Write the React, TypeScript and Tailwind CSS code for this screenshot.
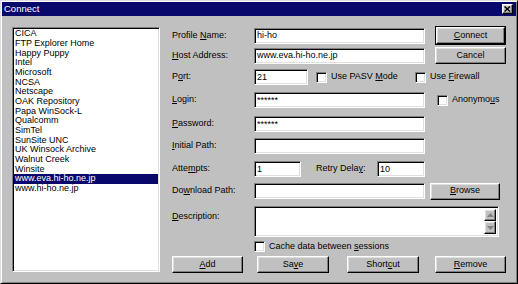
import React from "react";

const sunken =
  "border border-t-[#808080] border-l-[#808080] border-b-white border-r-white shadow-[inset_1px_1px_0_#000000,inset_-1px_-1px_0_#dfdfdf]";
const raised =
  "border border-t-white border-l-white border-b-black border-r-black shadow-[inset_-1px_-1px_0_#808080,inset_1px_1px_0_#dfdfdf]";

const items = [
  "CICA",
  "FTP Explorer Home",
  "Happy Puppy",
  "Intel",
  "Microsoft",
  "NCSA",
  "Netscape",
  "OAK Repository",
  "Papa WinSock-L",
  "Qualcomm",
  "SimTel",
  "SunSite UNC",
  "UK Winsock Archive",
  "Walnut Creek",
  "Winsite",
  "www.eva.hi-ho.ne.jp",
  "www.hi-ho.ne.jp",
];

function L({ pre, u, post }: { pre?: string; u: string; post?: string }) {
  return (
    <span className="whitespace-pre">
      {pre}
      <span className="underline underline-offset-[1px]">{u}</span>
      {post}
    </span>
  );
}

function Input({ w, value }: { w: string; value?: string }) {
  return (
    <div className={`${sunken} ${w} h-[16px] bg-white flex items-center pl-[2px] overflow-hidden`}>
      <span className="whitespace-pre leading-none">{value}</span>
    </div>
  );
}

function Check() {
  return <div className={`${sunken} w-[11px] h-[11px] bg-white shrink-0`} />;
}

function Button({ children, w, cls = "" }: { children: React.ReactNode; w: string; cls?: string }) {
  return (
    <div className={`${raised} ${w} h-[17px] flex items-center justify-center shrink-0 ${cls}`}>
      {children}
    </div>
  );
}

export default function App() {
  return (
    <div className="w-[518px] h-[284px] bg-[#c0c0c0] font-['Liberation_Sans',Arial,sans-serif] text-[9px] text-black border border-t-[#dfdfdf] border-l-[#dfdfdf] border-b-black border-r-black shadow-[inset_1px_1px_0_#ffffff,inset_-1px_-1px_0_#808080] p-[1px] overflow-hidden">
      {/* Title bar */}
      <div className="h-[14px] bg-[#08086b] flex items-center justify-between pl-[2px] pr-[3px]">
        <span className="text-white text-[9.5px] leading-none">Connect</span>
        <div className={`${raised} w-[11px] h-[10px] bg-[#c0c0c0] flex items-center justify-center`}>
          <svg width="7" height="6" viewBox="0 0 7 6">
            <path d="M0.5 0.5 L6 5.5 M6 0.5 L0.5 5.5" stroke="#000" strokeWidth="1.4" />
          </svg>
        </div>
      </div>

      {/* Body */}
      <div className="flex pl-[10px] pt-[11px]">
        {/* List box */}
        <div className={`${sunken} w-[148px] h-[245px] bg-white px-[1px] pt-[1px] shrink-0`}>
          {items.map((it) => {
            const sel = it === "www.eva.hi-ho.ne.jp";
            return (
              <div
                key={it}
                className={`h-[9.67px] flex items-center pl-[1px] leading-none whitespace-pre ${
                  sel ? "bg-[#08086b] text-white" : ""
                }`}
              >
                {it}
              </div>
            );
          })}
        </div>

        {/* Form */}
        <div className="ml-[12px] w-[335px] flex flex-col">
          {/* Profile Name */}
          <div className="flex items-center h-[17px]">
            <div className="w-[82px] shrink-0">
              <L pre="Profile " u="N" post="ame:" />
            </div>
            <Input w="w-[171px]" value="hi-ho" />
            <div className="ml-[10px] border border-black">
              <Button w="w-[69px]" cls="h-[15px]">
                <L u="C" post="onnect" />
              </Button>
            </div>
          </div>

          {/* Host Address */}
          <div className="flex items-center h-[17px] mt-[3px]">
            <div className="w-[82px] shrink-0">
              <L u="H" post="ost Address:" />
            </div>
            <Input w="w-[171px]" value="www.eva.hi-ho.ne.jp" />
            <Button w="w-[71px]" cls="ml-[10px]">
              Cancel
            </Button>
          </div>

          {/* Port */}
          <div className="flex items-center h-[16px] mt-[5px]">
            <div className="w-[82px] shrink-0">
              <L pre="P" u="o" post="rt:" />
            </div>
            <Input w="w-[54px]" value="21" />
            <div className="ml-[8px] w-[99px] flex items-center">
              <Check />
              <span className="ml-[4px] whitespace-pre">
                <L pre="Use PASV " u="M" post="ode" />
              </span>
            </div>
            <div className="flex items-center">
              <Check />
              <span className="ml-[4px] whitespace-pre">
                <L pre="Use " u="F" post="irewall" />
              </span>
            </div>
          </div>

          {/* Login */}
          <div className="flex items-center h-[16px] mt-[7px]">
            <div className="w-[82px] shrink-0">
              <L u="L" post="ogin:" />
            </div>
            <Input w="w-[171px]" value="******" />
            <div className="ml-[12px] flex items-center">
              <Check />
              <span className="ml-[4px] whitespace-pre">
                <L pre="Anonymo" u="u" post="s" />
              </span>
            </div>
          </div>

          {/* Password */}
          <div className="flex items-center h-[16px] mt-[8px]">
            <div className="w-[82px] shrink-0">
              <L u="P" post="assword:" />
            </div>
            <Input w="w-[171px]" value="******" />
          </div>

          {/* Initial Path */}
          <div className="flex items-center h-[16px] mt-[6px]">
            <div className="w-[82px] shrink-0">
              <L u="I" post="nitial Path:" />
            </div>
            <Input w="w-[171px]" />
          </div>

          {/* Attempts */}
          <div className="flex items-center h-[16px] mt-[7px]">
            <div className="w-[82px] shrink-0">
              <L pre="Atte" u="m" post="pts:" />
            </div>
            <Input w="w-[47px]" value="1" />
            <div className="ml-[15px] w-[61px]">
              <L pre="Retry Dela" u="y" post=":" />
            </div>
            <Input w="w-[48px]" value="10" />
          </div>

          {/* Download Path */}
          <div className="flex items-center h-[16px] mt-[6px]">
            <div className="w-[82px] shrink-0">
              <L pre="Do" u="w" post="nload Path:" />
            </div>
            <Input w="w-[171px]" />
            <Button w="w-[70px]" cls="ml-[5px]">
              <L u="B" post="rowse" />
            </Button>
          </div>

          {/* Description */}
          <div className="flex items-start h-[31px] mt-[7px]">
            <div className="w-[82px] shrink-0 pt-[4px]">
              <L u="D" post="escription:" />
            </div>
            <div className={`${sunken} w-[245px] h-[31px] bg-white flex justify-end p-[2px]`}>
              <div className="flex flex-col">
                <div className={`${raised} w-[12px] h-[13px] bg-[#c0c0c0] flex items-center justify-center`}>
                  <svg width="7" height="4" viewBox="0 0 7 4">
                    <path d="M3.5 0 L7 4 L0 4 Z" fill="#808080" />
                  </svg>
                </div>
                <div className={`${raised} w-[12px] h-[14px] bg-[#c0c0c0] flex items-center justify-center`}>
                  <svg width="7" height="4" viewBox="0 0 7 4">
                    <path d="M0 0 L7 0 L3.5 4 Z" fill="#808080" />
                  </svg>
                </div>
              </div>
            </div>
          </div>

          {/* Cache */}
          <div className="flex items-center h-[11px] mt-[4px] pl-[82px]">
            <Check />
            <span className="ml-[4px] whitespace-pre">
              <L pre="Cache data between " u="s" post="essions" />
            </span>
          </div>

          {/* Bottom buttons */}
          <div className="flex items-center h-[17px] mt-[4px]">
            <Button w="w-[71px]">
              <L u="A" post="dd" />
            </Button>
            <Button w="w-[72px]" cls="ml-[14px]">
              <L pre="Sa" u="v" post="e" />
            </Button>
            <Button w="w-[72px]" cls="ml-[18px]">
              <L pre="Short" u="c" post="ut" />
            </Button>
            <Button w="w-[71px]" cls="ml-[16px]">
              <L u="R" post="emove" />
            </Button>
          </div>
        </div>
      </div>
    </div>
  );
}
